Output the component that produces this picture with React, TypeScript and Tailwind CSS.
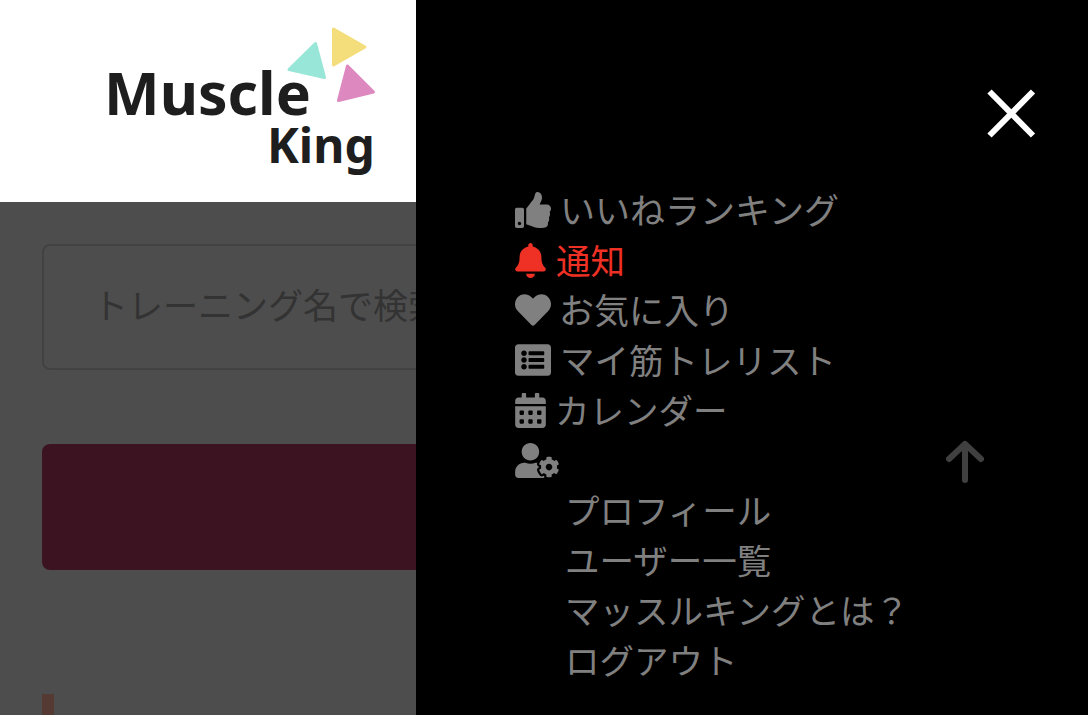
import { FaThumbsUp, FaBell, FaHeart, FaListAlt, FaCalendarAlt, FaUserCog } from "react-icons/fa";

const font = "font-['Noto_Sans_CJK_JP','Noto_Sans',sans-serif]";

function Logo() {
  return (
    <svg viewBox="0 0 416 202" className="block w-[416px] h-[202px]">
      <g strokeWidth="3" strokeLinejoin="round">
        <polygon points="333.500,29 365,47 333.500,65" fill="#f4de7c" stroke="#f4de7c" />
        <polygon points="315.500,43.500 324.500,77.500 289,69.500" fill="#98e6d8" stroke="#98e6d8" />
        <polygon points="347.500,66 373.500,92 338.500,100.500" fill="#de88c0" stroke="#de88c0" />
      </g>
      <text x="104" y="115" fill="#1e1e1e" fontSize="59" fontWeight="700" fontFamily="'Noto Sans',sans-serif">Muscle</text>
      <text x="267" y="163" fill="#1e1e1e" fontSize="48" fontWeight="700" fontFamily="'Noto Sans',sans-serif">King</text>
    </svg>
  );
}

const topItems = [
  { label: "いいねランキング", icon: <FaThumbsUp className="w-[36px] h-[36px]" />, gap: "gap-[9px]", size: "text-[35px]" },
  { label: "通知", icon: <FaBell className="w-[31px] h-[35px]" />, gap: "gap-[10px]", red: true },
  { label: "お気に入り", icon: <FaHeart className="w-[36px] h-[36px]" />, gap: "gap-[8px]", size: "text-[35px]" },
  { label: "マイ筋トレリスト", icon: <FaListAlt className="w-[36px] h-[36px]" />, gap: "gap-[9px]" },
  { label: "カレンダー", icon: <FaCalendarAlt className="w-[31px] h-[35px]" />, gap: "gap-[9px]" },
];

const subItems = ["プロフィール", "ユーザー一覧", "マッスルキングとは？", "ログアウト"];

export default function App() {
  return (
    <div className={`flex h-[715px] w-[1088px] overflow-hidden ${font}`}>
      <div className="w-[416px] shrink-0 overflow-hidden bg-[#4d4d4d]">
        <div className="bg-white">
          <Logo />
        </div>
        <div className="w-[1004px] pl-[42px] pt-[42px]">
          <div className="flex h-[126px] items-center rounded-[8px] border-2 border-[#424242] pb-[6px] pl-[49px] text-[35px] text-[#333333]">
            トレーニング名で検索
          </div>
          <div className="mt-[74px] h-[126px] rounded-[8px] bg-[#3c1421]" />
          <div className="mt-[124px] h-[21px] w-[12px] bg-[#553a33]" />
        </div>
      </div>

      <div className="relative flex-1 bg-black pl-[99px] pt-[185px] text-[34.500px] leading-[50px] text-[#808080]">
        <button className="absolute right-[51px] top-[89px] text-white" aria-label="close">
          <svg viewBox="0 0 50 50" className="block h-[50px] w-[50px]">
            <path d="M2.500 2.500 46 46.500M46 2.500 2.500 46.500" stroke="currentColor" strokeWidth="6" fill="none" />
          </svg>
        </button>
        <div className="absolute left-[529px] top-[438px] text-[#404040]">
          <svg viewBox="0 0 40 46" className="block h-[46px] w-[40px]" fill="none" stroke="currentColor" strokeWidth="6" strokeLinecap="round" strokeLinejoin="round">
            <path d="M20 42V6M4 21 20 6l16 15" />
          </svg>
        </div>

        <ul>
          {topItems.map((item) => (
            <li key={item.label} className={`flex h-[50px] items-center ${item.gap} ${item.red ? "text-[#ee3124]" : ""}`}>
              {item.icon}
              <span className={`-translate-y-[1.500px] ${item.size ?? ""}`}>{item.label}</span>
            </li>
          ))}
          <li className="flex h-[50px] items-center">
            <FaUserCog className="w-[44px] h-[35px]" />
          </li>
          {subItems.map((label) => (
            <li key={label} className="h-[50px] pl-[50px]">
              <span className="inline-block -translate-y-[1.500px]">{label}</span>
            </li>
          ))}
        </ul>
      </div>
    </div>
  );
}
